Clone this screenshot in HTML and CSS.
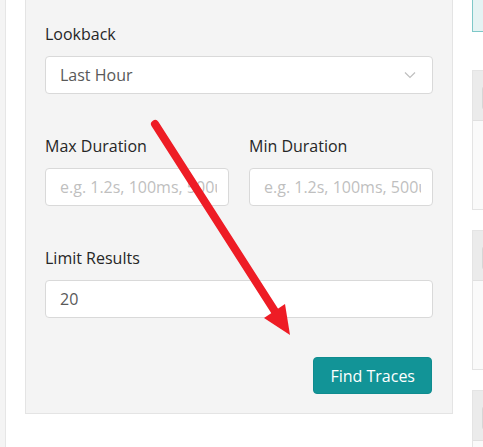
FILE: index.html
```html
<!DOCTYPE html>
<html>
<head>
<meta charset="utf-8">
<link rel="stylesheet" href="styles.css">
</head>
<body>
<div class="layout">
  <div class="edge"></div>
  <div class="main">
    <div class="panel">
      <div class="field">
        <div class="label">Lookback</div>
        <div class="select">
          <span class="value">Last Hour</span>
          <svg class="chev" width="12" height="8" viewBox="0 0 12 8"><path d="M1 1.5 L6 6.5 L11 1.5" fill="none" stroke="#bfbfbf" stroke-width="1.2"/></svg>
        </div>
      </div>
      <div class="field two">
        <div class="col">
          <div class="label">Max Duration</div>
          <div class="input placeholder"><span class="txt">e.g. 1.2s, 100ms, 500us</span></div>
        </div>
        <div class="col">
          <div class="label">Min Duration</div>
          <div class="input placeholder"><span class="txt">e.g. 1.2s, 100ms, 500us</span></div>
        </div>
      </div>
      <div class="field">
        <div class="label">Limit Results</div>
        <div class="input value"><span class="txt">20</span></div>
      </div>
      <div class="actions">
        <button class="btn">Find Traces</button>
      </div>
    </div>
    <div class="rcol">
      <div class="notice"></div>
      <div class="card"><div class="card-head"><span class="tag"></span></div><div class="card-body"></div></div>
      <div class="card"><div class="card-head"><span class="tag"></span></div><div class="card-body"></div></div>
      <div class="card"><div class="card-head"><span class="tag"></span></div><div class="card-body"></div></div>
    </div>
  </div>
</div>
<svg class="arrow" width="483" height="447" viewBox="0 0 483 447">
  <line x1="155" y1="124" x2="276" y2="313" stroke="#ee1c25" stroke-width="8" stroke-linecap="round"/>
  <polygon points="264,318 285,304 290,335" fill="#ee1c25"/>
</svg>
</body>
</html>
```

FILE: styles.css
```css
* { box-sizing: border-box; }
html, body {
  margin: 0;
  padding: 0;
  width: 483px;
  height: 447px;
  overflow: hidden;
  background: #f4f4f4;
  font-family: "Open Sans", "Noto Sans", sans-serif;
  font-size: 16px;
  color: #262626;
}
.layout {
  display: flex;
  width: 483px;
  height: 447px;
  overflow: hidden;
  position: relative;
}
.edge {
  width: 6px;
  flex: none;
  background: #f4f4f4;
  border-right: 1px solid #e6e6e6;
}
.main {
  flex: 1;
  height: 447px;
  overflow: hidden;
  background: #fff;
  display: flex;
  align-items: flex-start;
  gap: 19px;
  padding-left: 19px;
  min-width: 0;
}
.panel {
  width: 428px;
  flex: none;
  margin-top: -1px;
  background: #f4f4f4;
  border: 1px solid #e4e4e4;
  padding: 22px 19px 19px 19px;
}
.field { margin-bottom: 40px; }
.field.two {
  display: grid;
  grid-template-columns: 1fr 1fr;
  gap: 20px;
}
.col { min-width: 0; }
.label {
  line-height: 24px;
  margin-bottom: 10px;
  color: #262626;
}
.select, .input {
  height: 38px;
  background: #fff;
  border: 1px solid #d9d9d9;
  border-radius: 4px;
  padding: 0 11px 0 14px;
  display: flex;
  align-items: center;
  white-space: nowrap;
  color: #595959;
}
.txt {
  display: block;
  overflow: hidden;
  flex: 1;
  min-width: 0;
}
.select { justify-content: space-between; padding-right: 16px; }
.placeholder { color: #bfbfbf; }
.actions {
  display: flex;
  justify-content: flex-end;
}
.btn {
  height: 37px;
  padding: 0 16px;
  margin-right: 1px;
  background: #129497;
  border: 1px solid #0f8c8f;
  border-radius: 4px;
  color: #fff;
  font-family: inherit;
  font-size: 16px;
  margin-top: -1px;
}
.rcol {
  width: 11px;
  flex: none;
  display: flex;
  flex-direction: column;
  overflow: hidden;
  height: 447px;
}
.notice {
  height: 33px;
  flex: none;
  margin-top: -1px;
  width: 40px;
  background: #e5f3f3;
  border: 1px solid #7ec8c8;
  margin-bottom: 38px;
}
.card {
  height: 140px;
  flex: none;
  width: 40px;
  border: 1px solid #e4e4e4;
  margin-bottom: 20px;
  background: #fafafa;
}
.card-head {
  height: 50px;
  background: #ebebeb;
  border-bottom: 1px solid #e0e0e0;
  padding: 15px 0 0 9px;
}
.tag {
  display: block;
  width: 20px;
  height: 24px;
  border: 1px solid #d6d6d6;
  border-radius: 3px;
  background: #e6e6e6;
}
.arrow {
  position: absolute;
  left: 0;
  top: 0;
  pointer-events: none;
}
```
